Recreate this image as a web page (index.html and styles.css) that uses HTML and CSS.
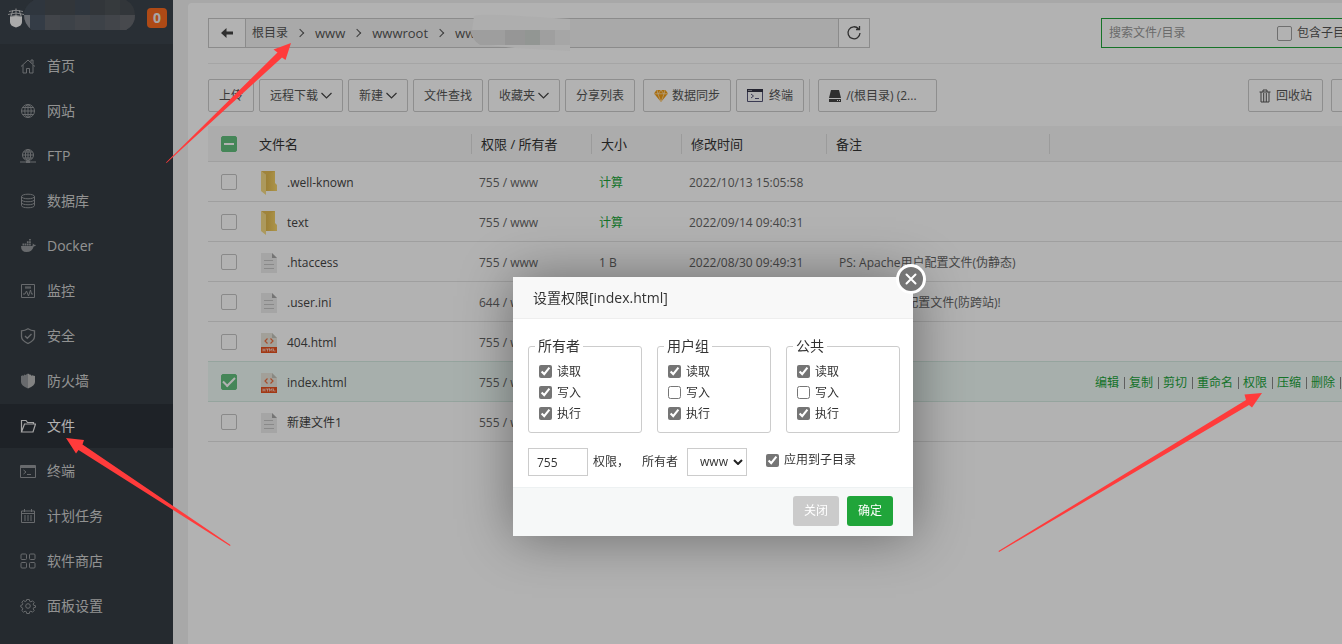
FILE: index.html
```html
<!DOCTYPE html>
<html lang="zh-CN">
<head>
<meta charset="utf-8">
<title>文件</title>
<link rel="stylesheet" href="styles.css">
</head>
<body>
<div class="app">
  <aside class="sidebar">
    <div class="host">
      <svg class="host-logo" viewBox="0 0 16 20" width="16" height="20"><path d="M2 9q6-2 12 0v5q0 4-6 5.500Q2 18 2 14z" fill="#f4f4f4"/><path d="M1 3.500q7-2.500 14 0M0 6.500q8-3 16 0M2 8.500q6-2 12 0M8 .5v8M5 2L3 8M11 2l2 6" fill="none" stroke="#ddd" stroke-width=".8"/></svg>
      <span class="host-count">0</span>
    </div>
    <nav class="menu">
      <a href="#"><svg viewBox="0 0 16 16"><path d="M1 8.500L8 2l7 6.500M3 7v8h3.500v-4.500h3V15H13V7M11 4.500V2h2v4"/></svg>首页</a>
      <a href="#"><svg viewBox="0 0 16 16"><circle cx="8" cy="8" r="6.500"/><ellipse cx="8" cy="8" rx="3.200" ry="6.500"/><path d="M8 1.500v13M1.500 8h13M2.500 4.500h11M2.500 11.500h11"/></svg>网站</a>
      <a href="#"><svg viewBox="0 0 16 16"><circle cx="8" cy="7" r="5.500"/><ellipse cx="8" cy="7" rx="2.600" ry="5.500"/><path d="M8 1.500v12M2.500 7h11M3.500 4h9M3.500 10h9M0 14h16" /><path d="M6 14h4" stroke-width="2"/></svg>FTP</a>
      <a href="#"><svg viewBox="0 0 16 16"><ellipse cx="8" cy="3.500" rx="6.500" ry="2.300"/><path d="M1.500 3.500v9c0 3 13 3 13 0v-9M1.500 6.500c0 3 13 3 13 0M1.500 9.500c0 3 13 3 13 0"/></svg>数据库</a>
      <a href="#"><svg viewBox="0 0 16 16"><path class="solid" d="M1 8h10.500c1 0 1.500-.5 1.200-2.500q1 .3 1.400 1.300q1-.2 1.900.3q-.5 1.400-2.300 1.400Q12 14 6.500 14Q1 14 1 8zM2.500 5.500h1.700v2H2.500zM4.700 5.500h1.700v2H4.700zM6.900 5.500h1.700v2H6.900zM9.100 5.500h1.700v2H9.100zM6.900 3.200h1.700v1.700H6.900zM9.100 3.200h1.700v1.700H9.100zM9.100 1h1.700v1.600H9.100z"/></svg>Docker</a>
      <a href="#"><svg viewBox="0 0 16 16"><path d="M1.500 1.500h13v13h-13zM3 11h2l1.500-3 2 5 2-6 1 4H13M5 4h6M5 5h6"/></svg>监控</a>
      <a href="#"><svg viewBox="0 0 16 16"><path d="M8 .8q3 2 6.500 2v5.700q0 4-6.500 7q-6.500-3-6.500-7V2.800q3.500 0 6.500-2zM5 8l2.300 2.300L11.500 6" stroke-width="1.300"/></svg>安全</a>
      <a href="#"><svg viewBox="0 0 16 16"><path class="solid" d="M8 .5v15Q1 12.500 1 9V3l2-.8v.8l2-1.800v1z"/><path d="M8 .5l2 1.200v-.5l2 1.800v-.8l3 .8v6q0 3.500-7 6.500z" fill="#bbb" stroke="none"/></svg>防火墙</a>
      <a href="#" class="active"><svg viewBox="0 0 16 16"><path d="M1.500 14V2.500h4.500l1.500 2h6V6M1.500 14h11.500l2.500-8H4.500z" stroke-width="1.200"/></svg>文件</a>
      <a href="#"><svg viewBox="0 0 16 16"><path d="M.5 2.500h15v12H.5zM3.500 7l2.500 2-2.500 2M7 11.500h4"/><path class="solid" d="M1 2h14v3H1z"/></svg>终端</a>
      <a href="#"><svg viewBox="0 0 16 16"><path d="M1.500 3h13v11.500h-13zM4.500 1v3M11.500 1v3M1.500 5.500h13"/><path d="M4 8h8M4 10h8M4 12h8" stroke-dasharray="2 1"/></svg>计划任务</a>
      <a href="#"><svg viewBox="0 0 16 16"><rect x="1" y="1" width="5.500" height="5.500" rx="1"/><rect x="9.500" y="1" width="5.500" height="5.500" rx="1"/><rect x="1" y="9.500" width="5.500" height="5.500" rx="1"/><rect x="9.500" y="9.500" width="5.500" height="5.500" rx="1"/></svg>软件商店</a>
      <a href="#"><svg viewBox="0 0 16 16"><circle cx="8" cy="8" r="2.300"/><path d="M6.700 1.500h2.600l.4 1.800 1.200.5 1.600-1 1.700 1.700-1 1.600.5 1.200 1.800.4v1.600l-1.800.4-.5 1.200 1 1.600-1.700 1.700-1.600-1-1.200.5-.4 1.800H6.700l-.4-1.800-1.200-.5-1.600 1-1.700-1.700 1-1.600-.5-1.200L.8 9V7.300l1.500-.4.5-1.200-1-1.600 1.700-1.600 1.600 1 1.200-.5z"/></svg>面板设置</a>
    </nav>
  </aside>

  <main class="main">
    <section class="panel">
      <div class="path-row">
        <div class="path">
          <button class="path-back" aria-label="返回"><svg viewBox="0 0 12 10" width="12" height="10"><path d="M5.500 0v3.500H12v3H5.500V10L0 5z" fill="#444"/></svg></button>
          <div class="crumbs">
            <a href="#" class="root">根目录</a><i class="sep"></i><a href="#">www</a><i class="sep"></i><a href="#">wwwroot</a><i class="sep"></i><a href="#">ww</a>
          </div>
          <button class="path-refresh" aria-label="刷新"><svg viewBox="0 0 16 16" width="16" height="16"><path d="M12.500 3.800A6 6 0 1 0 14 8M13.500 1v3.500H10" fill="none" stroke="#444" stroke-width="1.300"/></svg></button>
        </div>
        <div class="search">
          <input type="text" class="search-text" placeholder="搜索文件/目录" aria-label="搜索文件/目录">
          <input type="checkbox" class="box" id="sub"><label for="sub">包含子目录</label>
        </div>
      </div>

      <div class="tools">
        <button class="btn">上传</button>
        <button class="btn">远程下载<svg class="caret" viewBox="0 0 11 7"><path d="M.5 1l5 5 5-5"/></svg></button>
        <button class="btn">新建<svg class="caret" viewBox="0 0 11 7"><path d="M.5 1l5 5 5-5"/></svg></button>
        <button class="btn">文件查找</button>
        <button class="btn">收藏夹<svg class="caret" viewBox="0 0 11 7"><path d="M.5 1l5 5 5-5"/></svg></button>
        <button class="btn spaced">分享列表</button>
        <button class="btn"><svg class="gem" viewBox="0 0 14 12" width="14" height="12"><path d="M2.500 0h9L14 3.500 7 12 0 3.500z" fill="#f39c12"/><path d="M0 3.800h14M4 4l3 8 3-8-3-4zM4 4L3 0M10 4l1-4" fill="none" stroke="#ffe2b0" stroke-width=".8"/></svg>数据同步</button>
        <button class="btn"><svg class="term" viewBox="0 0 16 14" width="16" height="14"><path d="M.5.500h15v12H.5z" fill="none" stroke="#557"/><path d="M0 0h16v3H0z" fill="#334"/><path d="M1.500 1.500h1M3.500 1.500h1" stroke="#fff"/><path d="M4 5l2.500 2L4 9M8 9.500h4" fill="none" stroke="#557"/></svg>终端</button>
        <span class="rule"></span>
        <button class="btn disk"><svg viewBox="0 0 12 12" width="12" height="12"><path d="M2 0h8l2 8H0zM0 9h12v3H0z" fill="#444"/><path d="M8 10.500h1M10 10.500h1" stroke="#fff"/></svg>/(根目录) (2...</button>
        <button class="btn bin"><svg viewBox="0 0 12 14" width="12" height="14"><path d="M.5 3h11M4 3V1h4v2M2 3v10h8V3M4.700 4v9M7.300 4v9" fill="none" stroke="#555"/></svg>回收站</button>
        <button class="btn view" aria-label="视图"><svg viewBox="0 0 14 14" width="14" height="14"><path d="M0 1h4v3H0zM0 6h4v3H0zM0 11h4v3H0z" fill="#b9c36a"/></svg></button>
      </div>

      <table class="files">
        <colgroup><col class="c-check"><col class="c-name"><col class="c-perm"><col class="c-size"><col class="c-time"><col class="c-note"><col></colgroup>
        <thead><tr>
          <th><input type="checkbox" class="box some" aria-label="全选"></th>
          <th class="line">文件名</th><th class="line">权限 / 所有者</th><th class="line">大小</th><th class="line">修改时间</th><th class="line">备注</th><th></th>
        </tr></thead>
        <tbody>
          <tr><td><input type="checkbox" class="box" aria-label=".well-known"></td><td><a href="#" class="file"><svg class="folder" viewBox="0 0 16 24"><use href="#i-folder"/></svg>.well-known</a></td><td>755 / www</td><td><a href="#" class="act">计算</a></td><td>2022/10/13 15:05:58</td><td></td><td></td></tr>
          <tr><td><input type="checkbox" class="box" aria-label="text"></td><td><a href="#" class="file"><svg class="folder" viewBox="0 0 16 24"><use href="#i-folder"/></svg>text</a></td><td>755 / www</td><td><a href="#" class="act">计算</a></td><td>2022/09/14 09:40:31</td><td></td><td></td></tr>
          <tr><td><input type="checkbox" class="box" aria-label=".htaccess"></td><td><a href="#" class="file"><svg viewBox="0 0 16 20"><use href="#i-text"/></svg>.htaccess</a></td><td>755 / www</td><td>1 B</td><td>2022/08/30 09:49:31</td><td class="note">PS: Apache用户配置文件(伪静态)</td><td></td></tr>
          <tr><td><input type="checkbox" class="box" aria-label=".user.ini"></td><td><a href="#" class="file"><svg viewBox="0 0 16 20"><use href="#i-text"/></svg>.user.ini</a></td><td>644 / www</td><td></td><td></td><td class="note">PS: PHP用户配置文件(防跨站)!</td><td></td></tr>
          <tr><td><input type="checkbox" class="box" aria-label="404.html"></td><td><a href="#" class="file"><svg viewBox="0 0 16 20"><use href="#i-html"/></svg>404.html</a></td><td>755 / www</td><td></td><td></td><td></td><td></td></tr>
          <tr class="selected"><td><input type="checkbox" class="box" checked aria-label="index.html"></td><td><a href="#" class="file"><svg viewBox="0 0 16 20"><use href="#i-html"/></svg>index.html</a></td><td>755 / www</td><td></td><td></td><td></td><td><div class="actions"><a href="#">编辑</a><a href="#">复制</a><a href="#">剪切</a><a href="#">重命名</a><a href="#">权限</a><a href="#">压缩</a><a href="#">删除</a><a href="#">更多</a></div></td></tr>
          <tr><td><input type="checkbox" class="box" aria-label="新建文件1"></td><td><a href="#" class="file"><svg viewBox="0 0 16 20"><use href="#i-text"/></svg>新建文件1</a></td><td>555 / www</td><td></td><td></td><td></td><td></td></tr>
        </tbody>
      </table>
    </section>
  </main>
</div>

<div class="shade"></div>

<div class="dialog" role="dialog" aria-labelledby="dlg-title">
  <button class="dialog-close" aria-label="关闭窗口"><svg viewBox="0 0 12 12" width="12" height="12"><path d="M1.500 1.500l9 9M10.500 1.500l-9 9" stroke="#fff" stroke-width="2" stroke-linecap="round"/></svg></button>
  <h2 class="dialog-title" id="dlg-title">设置权限[index.html]</h2>
  <div class="dialog-body">
    <div class="groups">
      <fieldset><legend>所有者</legend>
        <label><input type="checkbox" checked>读取</label><label><input type="checkbox" checked>写入</label><label><input type="checkbox" checked>执行</label></fieldset>
      <fieldset><legend>用户组</legend>
        <label><input type="checkbox" checked>读取</label><label><input type="checkbox">写入</label><label><input type="checkbox" checked>执行</label></fieldset>
      <fieldset><legend>公共</legend>
        <label><input type="checkbox" checked>读取</label><label><input type="checkbox">写入</label><label><input type="checkbox" checked>执行</label></fieldset>
    </div>
    <div class="owner-row">
      <input type="text" id="mode" value="755"><label class="mode-label" for="mode">权限，</label>
      <label class="owner-label" for="owner">所有者</label>
      <span class="select"><select id="owner"><option>www</option></select><svg viewBox="0 0 10 6" width="10" height="6"><path d="M1 1l4 4 4-4" fill="none" stroke="#222" stroke-width="2"/></svg></span>
      <label class="recursive"><input type="checkbox" checked>应用到子目录</label>
    </div>
  </div>
  <div class="dialog-foot"><button class="cancel">关闭</button><button class="ok">确定</button></div>
</div>

<svg class="marks" aria-hidden="true">
  <defs>
    <linearGradient id="fold" x1="0" x2="1"><stop offset="0" stop-color="#e0b84e"/><stop offset="1" stop-color="#f7d56c"/></linearGradient>
    <clipPath id="pill"><path d="M34 0h92q9 5 9 15t-9 15H32q-8-6-8-15t10-15z"/></clipPath>
    <clipPath id="smear"><path d="M470 30h100v15h-90q-8-5-10-15z"/></clipPath>
    <g id="i-folder"><path d="M5 0h9v12l2 2v6H5z" fill="url(#fold)"/><path d="M0 0l5 4v20l-5-4z" fill="#f7dc86"/><path d="M0 0h14L5 4z" fill="#e5bd55"/></g>
    <g id="i-text"><path d="M0 0h11l5 5v15H0z" fill="#ececec"/><path d="M11 0l5 5h-5z" fill="#a8a8a8"/><path d="M3 7.500h9M3 11.500h10M3 15.500h10" stroke="#c4c4c4"/></g>
    <g id="i-html"><path d="M0 0h11l5 5v15H0z" fill="#e9e6dc"/><path d="M11 0l5 5h-5z" fill="#c4c4bc"/><path d="M0 14h16v6H0z" fill="#e8511f"/><path d="M6.500 5.500L4 8l2.500 2.500M9.500 5.500L12 8l-2.500 2.500" fill="none" stroke="#ee7040" stroke-width="1.200"/><path d="M2 15.500v3M4 15.500v3M2 17h2M5 16h3M6.500 16v2.500M8.500 18.500v-3l1.200 2 1.300-2v3M12.500 15.500V18H14.500" fill="none" stroke="#fff" stroke-width=".6"/></g>
  </defs>
  <g clip-path="url(#pill)">
    <path d="M24 0h114v15H24z" fill="#32363a"/><path d="M24 0h21v15H24zM75 0h15v15H75z" fill="#2f363e"/><path d="M105 0h15v15h-15z" fill="#363a3d"/>
    <path d="M24 15h114v15H24z" fill="#42454a"/><path d="M24 15h6v15h-6z" fill="#686b70"/><path d="M30 15h15v15H30z" fill="#343c46"/><path d="M60 15h15v15H60zM90 15h15v15H90z" fill="#3d4248"/><path d="M120 15h18v15h-18z" fill="#47494d"/>
  </g>
  <path d="M474 16q5-2 28-1l68 4v32l-55-3-35-4q-8-5-8-14z" fill="#aeaeae"/>
  <g clip-path="url(#smear)"><path d="M470 30h35v15h-35z" fill="#9e9e9e"/><path d="M505 30h20v15h-20z" fill="#969696"/><path d="M525 30h15v15h-15z" fill="#929693"/><path d="M540 30h15v15h-15z" fill="#9f9f9f"/><path d="M555 30h15v15h-15z" fill="#a6a6a6"/></g>
  <g fill="#ff3b3b">
    <path d="M291 43l-17.500 6.500 4 3L166 162.500l.5.500L282 57.500l3.500 2.500z"/>
    <path d="M66 438l18 2-1.500 4.500L230.500 545l-.5 1L78.500 450l-2.500 3.500z"/>
    <path d="M1262 393l-17.500 1.500L1246 400 998.500 551l.5 1 250-147 3 2.500z"/>
  </g>
</svg>
</body>
</html>
```
FILE: styles.css
```css
* { box-sizing: border-box; }
body {
  margin: 0;
  background: #f1f1f1;
  color: #666;
  font: 12px/20px "Open Sans", "Noto Sans CJK SC", sans-serif;
  overflow: hidden;
}
a { color: inherit; text-decoration: none; }
button, input, select { font: inherit; color: inherit; margin: 0; }
button { cursor: pointer; }

.app { display: flex; min-height: 100vh; }

/* Sidebar */
.sidebar { flex: 0 0 173px; background: #353d44; }
.host {
  display: flex; align-items: flex-start; justify-content: space-between;
  height: 44px; padding: 8px 6px 0 8px; background: #3c444d;
}
.host-count {
  width: 20px; border-radius: 4px; background: #fa6b20; color: #eee;
  font-size: 14px; font-weight: bold; text-align: center;
}
.menu a {
  display: flex; align-items: center; gap: 11px;
  height: 44px; margin-bottom: 1px; padding-left: 20px;
  color: #d2d2d2; font-size: 14px;
}
.menu svg { width: 16px; height: 16px; fill: none; stroke: #96999c; }
.menu .solid { fill: #96999c; stroke: none; }
.menu .active { background: #2c3138; color: #fff; }
.menu .active svg { stroke: #eee; }

/* File panel */
.main { flex: 1; min-width: 0; padding: 3px 0 0 15px; overflow: hidden; }
.panel {
  min-width: 1200px; min-height: 100vh; padding: 15px 12px 0 20px;
  border-radius: 4px; background: #fff;
}
.path-row {
  display: flex; justify-content: space-between;
  padding-bottom: 15px; border-bottom: 1px solid #ececec;
}
.path {
  display: flex; width: 662px; height: 30px;
  border: 1px solid #c8c8c8; background: #f3f3f3;
}
.path button { border: 0; background: #fff; padding: 0; display: grid; place-items: center; }
.path .path-back { width: 37px; border-right: 1px solid #c8c8c8; }
.path .path-refresh { width: 31px; border-left: 1px solid #c8c8c8; }
.crumbs { flex: 1; display: flex; align-items: center; padding-left: 6px; font-size: 13px; color: #555; }
.crumbs .root { font-size: 12px; }
.sep {
  width: 6px; height: 6px; margin: 0 12px 0 9px;
  border: solid #555; border-width: 1px 1px 0 0; transform: rotate(45deg);
}
.search {
  display: flex; align-items: center; width: 275px; height: 30px;
  border: 1px solid #20a53a; color: #555;
}
.search-text { flex: 1; min-width: 0; padding: 0 7px; border: 0; background: none; outline: 0; }
.search-text::placeholder { color: #999; }
.search .box { width: 15px; height: 15px; border-color: #a0a0a0; }
.search label { margin: 0 18px 0 5px; white-space: nowrap; }

.tools { display: flex; gap: 5px; margin: 15px 0 14px; }
.btn {
  display: flex; align-items: center; height: 33px; padding: 0 10px;
  border: 1px solid #ccc; border-radius: 2px; background: #fff; color: #555; white-space: nowrap;
}
.caret { width: 11px; height: 7px; margin-left: 3px; fill: none; stroke: #444; stroke-width: 1.2; }
.spaced { margin-right: 3px; }
.gem { margin-right: 4px; }
.term { margin-right: 6px; }
.rule { width: 1px; background: #ddd; }
.disk { width: 119px; margin-left: 3px; gap: 5px; }
.bin { margin-left: auto; gap: 5px; }
.view { width: 45px; margin-left: 3px; }

/* Tick boxes of the file list */
.box {
  display: grid; place-items: center; appearance: none;
  width: 16px; height: 16px; border: 1px solid #c4c4c4; border-radius: 2px;
}
.box:checked, .some { border-color: #64c07e; background: #64c07e; }
.box:checked::after {
  content: ""; width: 10px; height: 5px; margin-top: -3px;
  border: solid #fff; border-width: 0 0 2px 2px; transform: rotate(-45deg);
}
.some::after { content: ""; width: 10px; height: 2px; background: #fff; }

/* File list */
.files { width: 100%; table-layout: fixed; border-collapse: separate; border-spacing: 0; }
.c-check { width: 42px; }
.c-name { width: 222px; }
.c-perm { width: 120px; }
.c-size { width: 90px; }
.c-time { width: 145px; }
.c-note { width: 223px; }
.files th {
  height: 36px; padding: 0 9px; border-bottom: 1px solid #e6e6e6; background-color: #f6f6f6;
  color: #333; font-size: 13px; font-weight: normal; text-align: left; white-space: nowrap;
}
.files .line {
  background-image: linear-gradient(#dedede, #dedede);
  background-position: right center; background-size: 1px 20px; background-repeat: no-repeat;
}
.files td { height: 40px; padding: 2px 7px 0; border-bottom: 1px solid #e4e4e4; white-space: nowrap; }
.files th:first-child, .files td:first-child { padding: 0 0 0 13px; }
.files td.note { padding-left: 12px; }
.files .act { color: #20a53a; }
.file { display: flex; align-items: center; gap: 10px; padding-left: 4px; color: #444; }
.file svg { width: 16px; height: 20px; }
.file .folder { height: 24px; }
.selected td { background: #f0fbf7; border-color: #d6ebe2; box-shadow: 0 -1px #d6ebe2; }
.actions { display: flex; justify-content: flex-end; color: #20a53a; }
.actions a + a { margin-left: 5px; padding-left: 5px; background: linear-gradient(#888, #888) left center / 1px 12px no-repeat; }

/* Dialog */
.shade { position: fixed; inset: 0; background: rgba(0, 0, 0, .3); }
.dialog {
  position: absolute; left: 513px; top: 277px; width: 400px;
  background: #fff; color: #333; box-shadow: 1px 1px 50px rgba(0, 0, 0, .4);
}
.dialog-close {
  position: absolute; right: -13px; top: -13px; width: 30px; height: 30px; padding: 0;
  display: grid; place-items: center;
  border: 3px solid #fff; border-radius: 50%; background: #757575;
}
.dialog-title {
  margin: 0; padding: 0 20px; border-bottom: 1px solid #eee; background: #f8f8f8;
  font-size: 14px; font-weight: normal; line-height: 41px;
}
.dialog-body { padding: 17px 13px 11px 15px; }
.groups { display: flex; gap: 15px; }
fieldset {
  flex: 1; min-width: 0; margin: 0; padding: 5px 10px 8px;
  border: 1px solid #ccc; border-radius: 3px;
}
legend { margin-left: -4px; padding: 0 3px; font-size: 14px; line-height: 20px; }
fieldset label { display: flex; align-items: center; gap: 5px; line-height: 21px; }
.dialog input[type="checkbox"] { width: 13px; height: 13px; accent-color: #757575; }
.owner-row { display: flex; align-items: center; margin-top: 15px; }
#mode { width: 60px; height: 28px; padding: 0 8px; border: 1px solid #ccc; }
.mode-label { margin-left: 5px; }
.owner-label { margin-left: 13px; }
.select { display: grid; width: 60px; height: 28px; margin-left: 9px; align-items: center; }
.select select, .select svg { grid-area: 1 / 1; }
.select select { width: 100%; height: 28px; padding: 0 12px; appearance: none; border: 1px solid #ccc; background: #fff; }
.select svg { justify-self: end; margin-right: 4px; pointer-events: none; }
.recursive { display: flex; align-items: center; gap: 5px; margin: 0 0 4px 19px; }
.dialog-foot {
  display: flex; justify-content: flex-end; gap: 8px;
  padding: 8px 20px 10px; border-top: 1px solid #edf1f2; background: #f6f8f8;
}
.dialog-foot button { width: 46px; height: 30px; padding: 0; border: 0; border-radius: 3px; color: #fff; }
.cancel { background: #cbcbcb; }
.ok { background: #20a53a; }

.marks { position: fixed; inset: 0; width: 100%; height: 100%; pointer-events: none; }
```
